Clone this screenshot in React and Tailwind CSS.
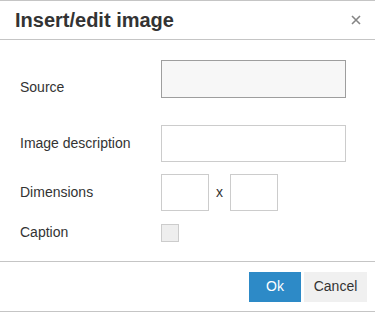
export default function App() {
  return (
    <div className="w-[375px] h-[313px] bg-white text-[#333] font-['Liberation_Sans',Arial,sans-serif] border-t border-[#c5c5c5]">
      <div className="h-[39px] flex items-center justify-between border-b border-[#c5c5c5] pl-[15px] pr-[14px]">
        <h1 className="text-[20px] font-bold leading-none text-[#333]">Insert/edit image</h1>
        <button className="text-[#858585] text-[16px] leading-none">
          <svg width="10" height="10" viewBox="0 0 10 10">
            <path d="M1 1 L9 9 M9 1 L1 9" stroke="#858585" strokeWidth="1.6" />
          </svg>
        </button>
      </div>

      <div className="pt-[20px] text-[14px]">
        <div className="flex items-center">
          <label className="w-[161px] pl-[20px] mt-[16px]">Source</label>
          <div className="w-[185px] h-[38px] border border-[#9e9e9e] bg-[#f7f7f7]" />
        </div>
        <div className="flex items-center mt-[27px]">
          <label className="w-[161px] pl-[20px]">Image description</label>
          <div className="w-[185px] h-[37px] border border-[#cccccc] bg-white" />
        </div>
        <div className="flex items-center mt-[12px]">
          <label className="w-[161px] pl-[20px]">Dimensions</label>
          <div className="w-[48px] h-[37px] border border-[#cccccc] bg-white" />
          <span className="w-[21px] text-center">x</span>
          <div className="w-[48px] h-[37px] border border-[#cccccc] bg-white" />
        </div>
        <div className="flex items-center mt-[11px]">
          <label className="w-[161px] pl-[20px]">Caption</label>
          <div className="w-[18px] h-[18px] border border-[#cccccc] bg-[#eeeeee]" />
        </div>
      </div>

      <div className="mt-[18px] border-t border-b border-[#c5c5c5] h-[51px] flex items-center justify-end gap-[3px] pr-[8px] text-[14px]">
        <button className="w-[52px] h-[30px] bg-[#2d8ac7] text-white">Ok</button>
        <button className="w-[63px] h-[30px] bg-[#f0f0f0] text-[#333]">Cancel</button>
      </div>
    </div>
  );
}
